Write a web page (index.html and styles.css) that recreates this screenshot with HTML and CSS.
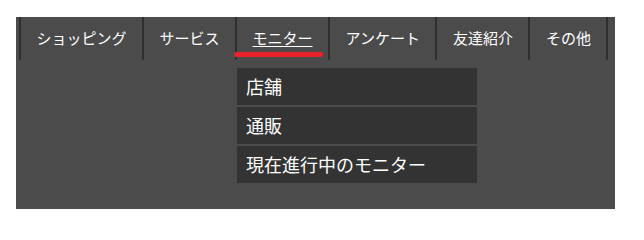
FILE: index.html
```html
<!DOCTYPE html>
<html lang="ja">
<head>
<meta charset="utf-8">
<link rel="stylesheet" href="styles.css">
</head>
<body>
<div class="panel">
  <ul class="nav">
    <li class="nav-item"><span class="nav-link">ショッピング</span></li>
    <li class="nav-item"><span class="nav-link">サービス</span></li>
    <li class="nav-item nav-item--active">
      <span class="nav-link nav-link--active">モニター</span>
      <ul class="dropdown">
        <li class="dropdown-item">店舗</li>
        <li class="dropdown-item">通販</li>
        <li class="dropdown-item">現在進行中のモニター</li>
      </ul>
    </li>
    <li class="nav-item"><span class="nav-link">アンケート</span></li>
    <li class="nav-item"><span class="nav-link">友達紹介</span></li>
    <li class="nav-item nav-item--last"><span class="nav-link">その他</span></li>
  </ul>
</div>
</body>
</html>
```

FILE: styles.css
```css
html, body {
  margin: 0;
  padding: 0;
  background: #ffffff;
}

body {
  font-family: "Noto Sans CJK JP", "Noto Sans", sans-serif;
  color: #ffffff;
}

.panel {
  margin: 17px 0 0 16px;
  width: 599px;
  height: 192px;
  background: #4b4b4b;
}

.nav {
  list-style: none;
  margin: 0;
  padding: 0 0 0 3px;
  display: flex;
  height: 43px;
}

.nav-item {
  position: relative;
  border-left: 2px solid #2f2f2f;
  padding: 0 15.5px;
  height: 43px;
  line-height: 41px;
  font-size: 15px;
  white-space: nowrap;
}

.nav-item--last {
  border-right: 2px solid #2f2f2f;
}

.nav-link {
  color: #ffffff;
}

.nav-link--active {
  text-decoration: underline;
  text-underline-offset: 2px;
  text-decoration-thickness: 1px;
}

.nav-item--active::after {
  content: "";
  position: absolute;
  left: -3px;
  top: 35px;
  width: 89px;
  height: 5px;
  border-radius: 3px;
  background: #e8212a;
}

.dropdown {
  list-style: none;
  margin: 0;
  padding: 0;
  position: absolute;
  left: 0;
  top: 51px;
  width: 240px;
  display: flex;
  flex-direction: column;
  gap: 2px;
}

.dropdown-item {
  height: 37px;
  line-height: 37px;
  padding-left: 9px;
  background: #333333;
  font-size: 18px;
}
```
